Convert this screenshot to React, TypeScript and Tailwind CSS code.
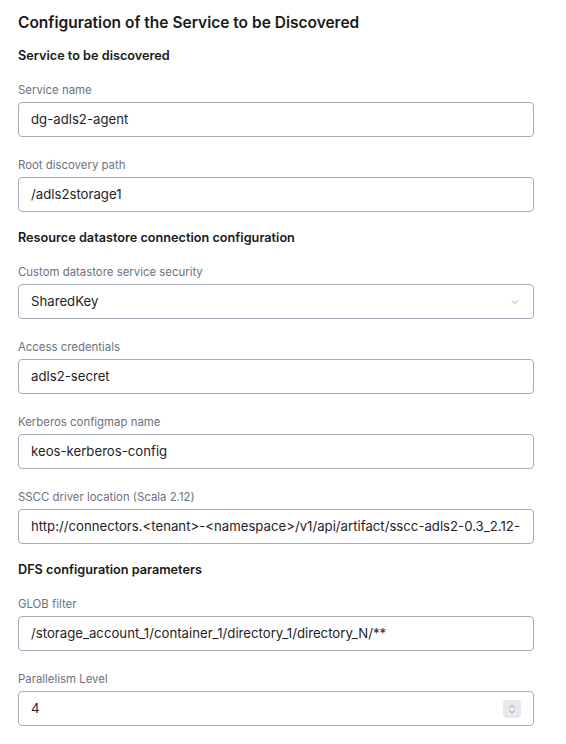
import { ChevronDown, ChevronsUpDown } from 'lucide-react';

const font = { fontFamily: 'Inter, "Noto Sans", sans-serif' };

function Label({ text }: { text: string }) {
  return <label className="block text-[11.4px] leading-4 text-[#6b7280] mb-1">{text}</label>;
}

function Field({ label, value }: { label: string; value: string }) {
  return (
    <div className="mb-5">
      <Label text={label} />
      <div className="h-[35px] w-[516px] rounded border border-[#a3adba] bg-white flex items-center px-3 text-[13.2px] text-[#1f2328] whitespace-nowrap overflow-hidden">
        {value}
      </div>
    </div>
  );
}

function SelectField({ label, value }: { label: string; value: string }) {
  return (
    <div className="mb-5">
      <Label text={label} />
      <div className="h-[35px] w-[516px] rounded border border-[#a3adba] bg-white flex items-center justify-between px-3 text-[13.2px] text-[#1f2328]">
        <span>{value}</span>
        <ChevronDown className="h-3 w-3 text-[#8a93a0]" strokeWidth={1.5} />
      </div>
    </div>
  );
}

function NumberField({ label, value }: { label: string; value: string }) {
  return (
    <div className="mb-5">
      <Label text={label} />
      <div className="h-[35px] w-[516px] rounded border border-[#a3adba] bg-white flex items-center justify-between pl-3 pr-[12px] text-[13.2px] text-[#1f2328]">
        <span>{value}</span>
        <div className="h-[18px] w-[18px] rounded-sm bg-[#e8e8ec] flex items-center justify-center">
          <ChevronsUpDown className="h-3 w-3 text-[#8a8aa0]" strokeWidth={1.5} />
        </div>
      </div>
    </div>
  );
}

function Section({ title, first }: { title: string; first?: boolean }) {
  return (
    <h3
      className={
        first
          ? 'text-[12.7px] leading-5 font-semibold text-[#1a1a1a] mb-4'
          : 'text-[12.7px] leading-5 font-semibold text-[#1a1a1a] -mt-1 mb-4'
      }
    >
      {title}
    </h3>
  );
}

export default function App() {
  return (
    <div className="min-h-screen bg-white px-[18px] pt-[13px]" style={font}>
      <h1 className="text-[15.5px] leading-5 font-semibold text-[#1a1a1a] mb-[13px]">
        Configuration of the Service to be Discovered
      </h1>

      <Section title="Service to be discovered" first />
      <Field label="Service name" value="dg-adls2-agent" />
      <Field label="Root discovery path" value="/adls2storage1" />

      <Section title="Resource datastore connection configuration" />
      <SelectField label="Custom datastore service security" value="SharedKey" />
      <Field label="Access credentials" value="adls2-secret" />
      <Field label="Kerberos configmap name" value="keos-kerberos-config" />
      <Field
        label="SSCC driver location (Scala 2.12)"
        value="http://connectors.<tenant>-<namespace>/v1/api/artifact/sscc-adls2-0.3_2.12-"
      />

      <Section title="DFS configuration parameters" />
      <Field label="GLOB filter" value="/storage_account_1/container_1/directory_1/directory_N/**" />
      <NumberField label="Parallelism Level" value="4" />
    </div>
  );
}
